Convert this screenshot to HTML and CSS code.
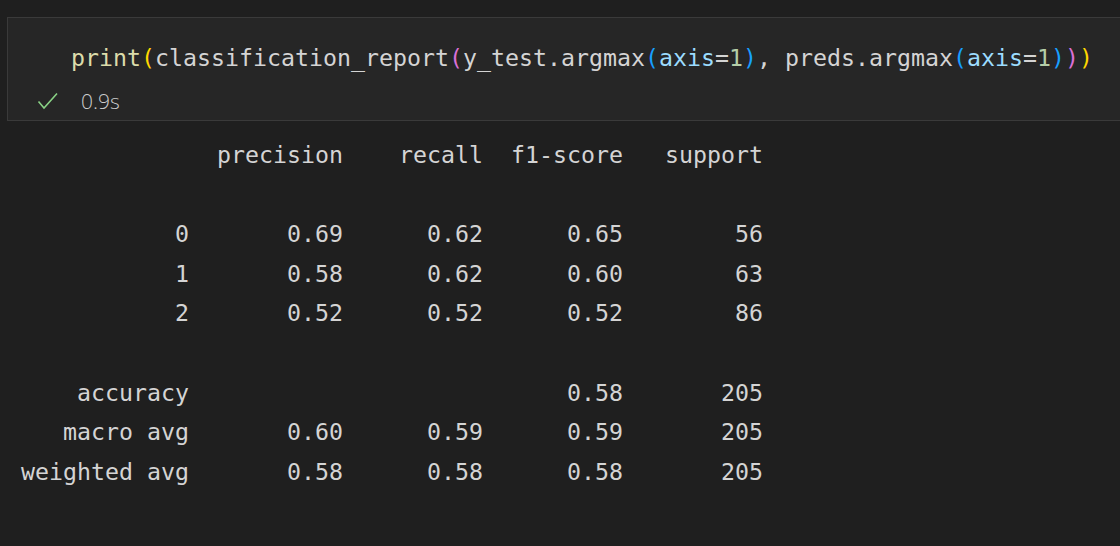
FILE: index.html
```html
<!DOCTYPE html>
<html>
<head>
<meta charset="utf-8">
<link rel="stylesheet" href="styles.css">
</head>
<body>
<div class="cell">
  <div class="code"><span class="fn">print</span><span class="b1">(</span>classification_report<span class="b2">(</span>y_test.argmax<span class="b3">(</span><span class="var">axis</span>=<span class="num">1</span><span class="b3">)</span>, preds.argmax<span class="b3">(</span><span class="var">axis</span>=<span class="num">1</span><span class="b3">)</span><span class="b2">)</span><span class="b1">)</span></div>
  <div class="status">
    <svg class="check" width="22" height="18" viewBox="0 0 22 18"><polyline points="1.5,9.5 7,16 20,1.5" fill="none" stroke="#89d185" stroke-width="1.6"/></svg>
    <span class="time">0.9s</span>
  </div>
</div>
<pre class="output">              precision    recall  f1-score   support

           0       0.69      0.62      0.65        56
           1       0.58      0.62      0.60        63
           2       0.52      0.52      0.52        86

    accuracy                           0.58       205
   macro avg       0.60      0.59      0.59       205
weighted avg       0.58      0.58      0.58       205
</pre>
</body>
</html>
```
FILE: styles.css
```css
html, body {
  margin: 0;
  padding: 0;
  background: #1f1f1f;
  height: 100%;
  overflow: hidden;
}

.cell {
  margin: 17px 0 0 7px;
  border: 1px solid #3a3a3a;
  border-right: none;
  background: #262626;
  padding: 20px 0 7px 63px;
}

.code {
  font-family: "DejaVu Sans Mono", "Liberation Mono", monospace;
  font-size: 23.25px;
  line-height: 40px;
  height: 40px;
  color: #d4d4d4;
  white-space: pre;
}

.fn { color: #dcdcaa; }
.var { color: #9cdcfe; }
.num { color: #b5cea8; }
.b1 { color: #ffd700; }
.b2 { color: #da70d6; }
.b3 { color: #179fff; }

.status {
  display: flex;
  align-items: center;
  height: 24px;
  margin-top: 11px;
  margin-left: -34px;
}

.check {
  display: block;
}

.time {
  margin-left: 22px;
  font-family: "Open Sans", "Noto Sans", sans-serif;
  font-size: 21px;
  color: #cccccc;
  font-weight: 300;
}

.output {
  margin: 14px 0 0 21px;
  font-family: "DejaVu Sans Mono", "Liberation Mono", monospace;
  font-size: 23.25px;
  line-height: 39.6px;
  color: #d4d4d4;
}
```
